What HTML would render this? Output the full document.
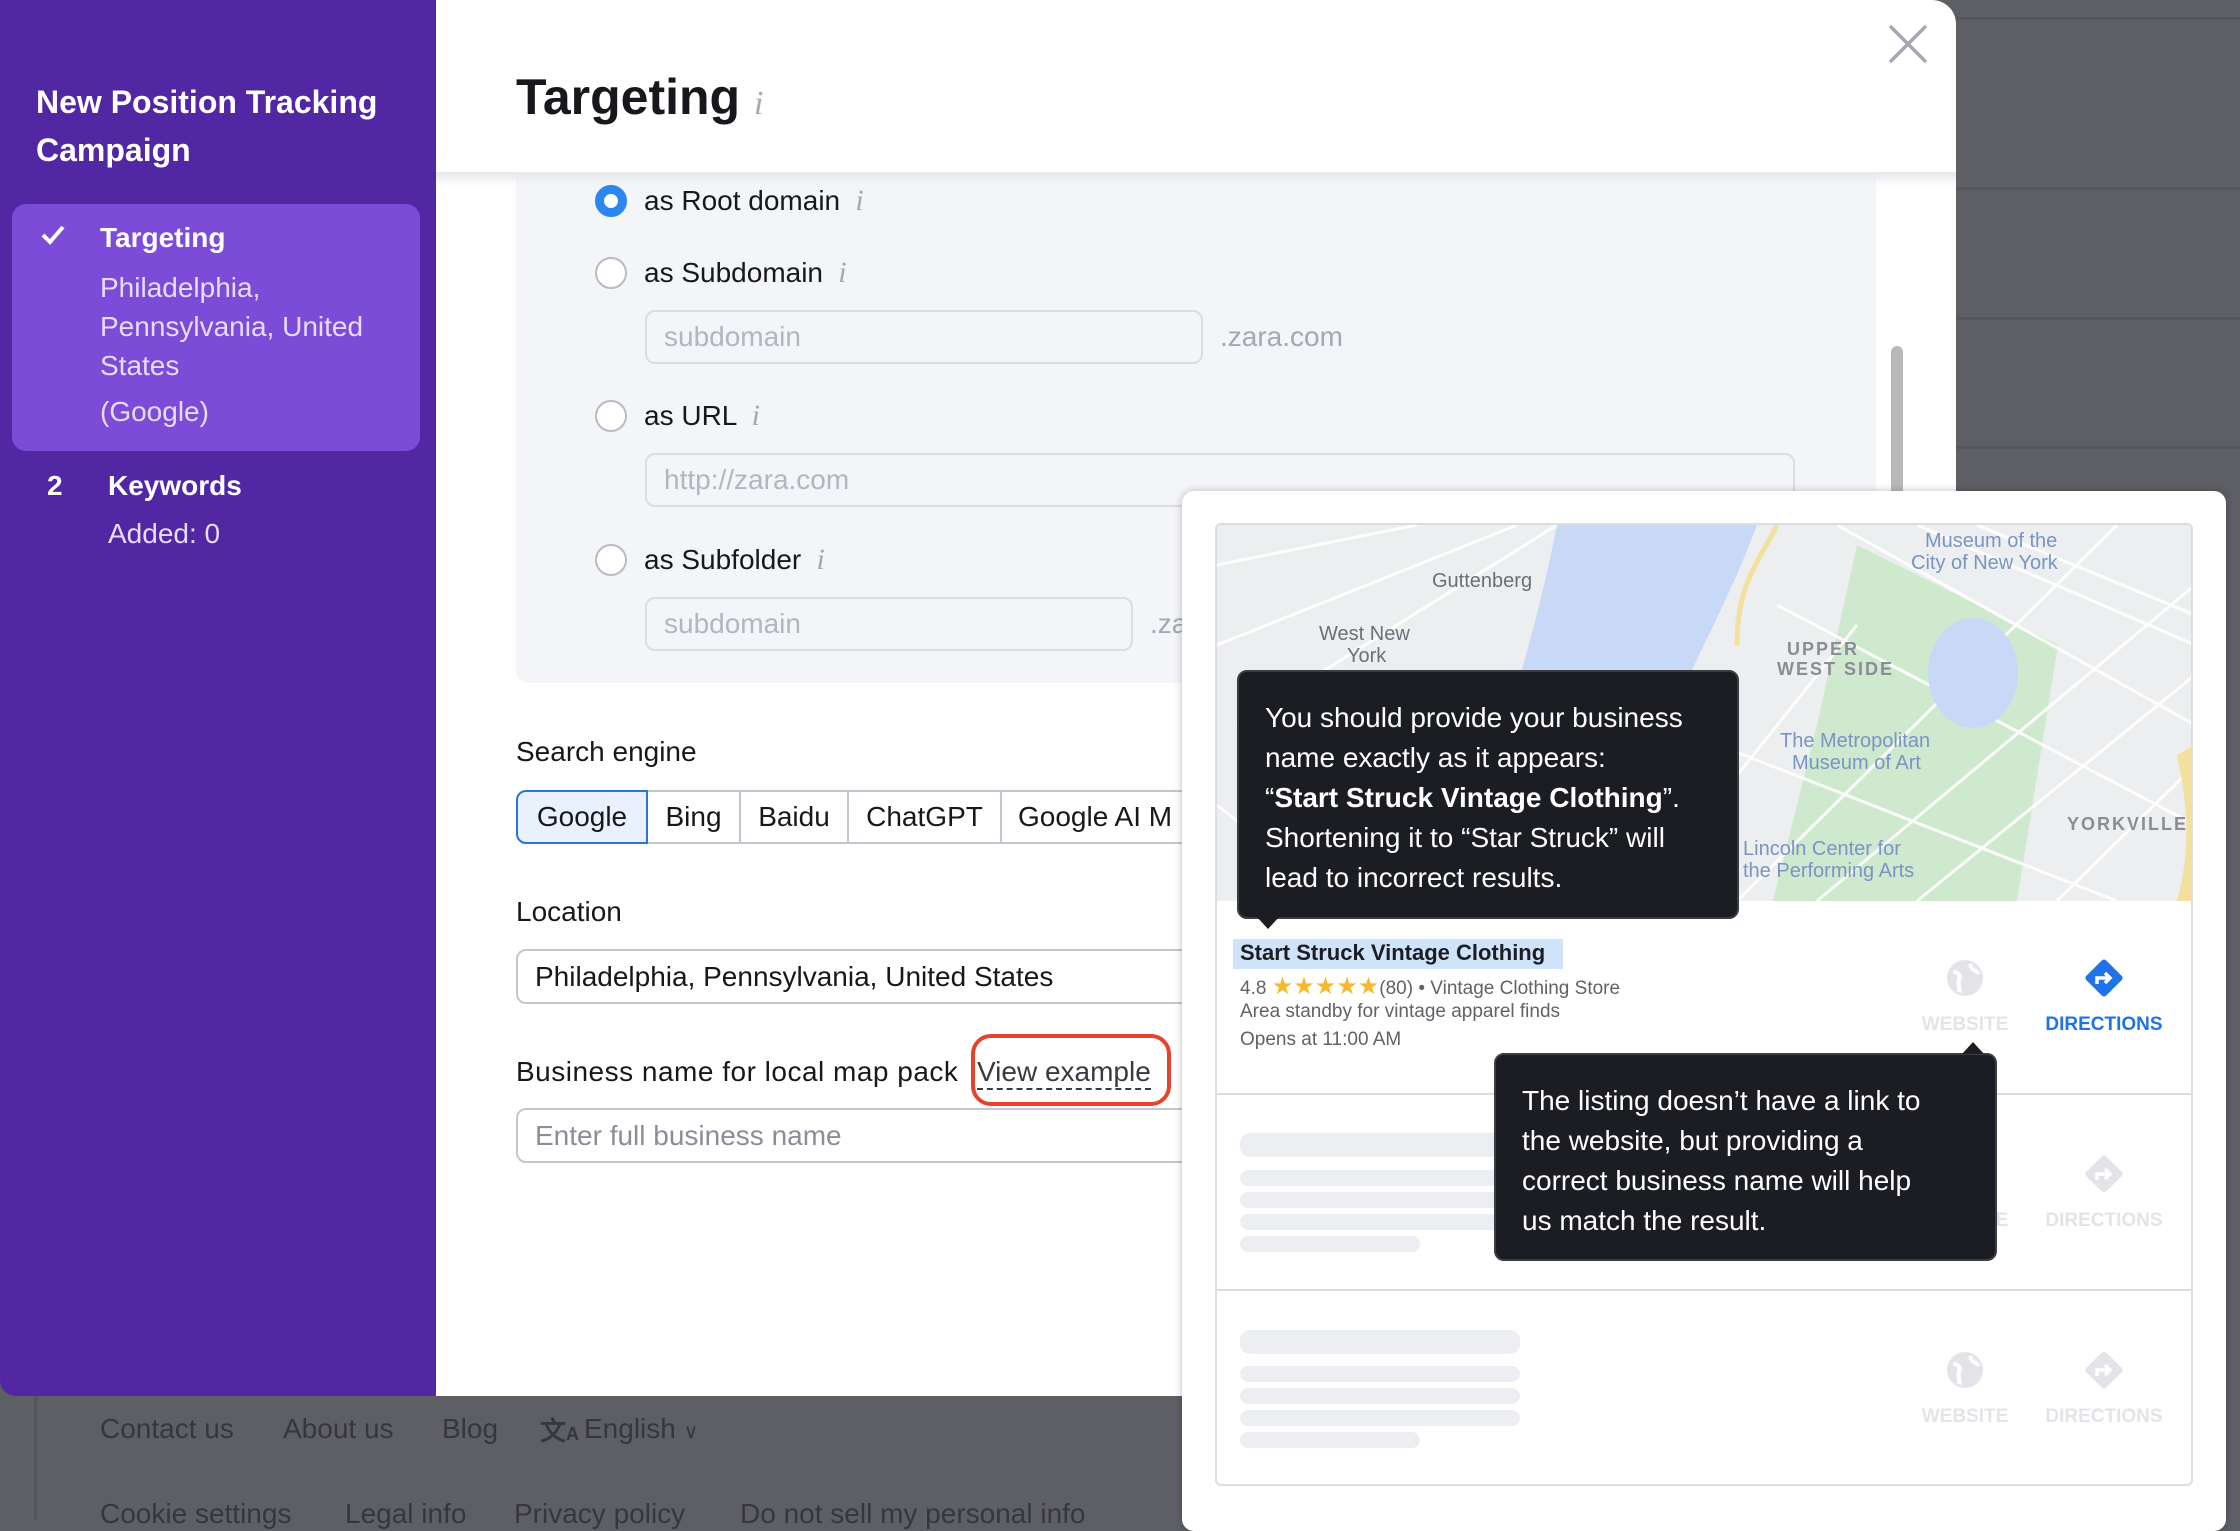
<!DOCTYPE html>
<html><head><meta charset="utf-8"><style>
*{box-sizing:border-box;margin:0;padding:0}
body{width:2240px;height:1520px;overflow:hidden;background:#5e5f65;font-family:"Liberation Sans",sans-serif;position:relative}
.a{position:absolute;white-space:nowrap}
.hl{position:absolute;left:1955px;right:0;height:3px;background:#56575d}
.sb{left:0;top:0;width:436px;height:1396px;background:#5227a3;border-bottom-left-radius:16px}
.modal{left:436px;top:0;width:1520px;height:1396px;background:#fff;border-top-right-radius:24px}
.t28{font-size:28px;color:#17181c}
.inp{position:absolute;border:2px solid #dcdde3;border-radius:10px;background:#f4f5f9;font-size:28px;color:#b3b5bf;padding-left:17px;display:flex;align-items:center}
.radio{position:absolute;width:32px;height:32px;border-radius:50%;border:2px solid #b9bac3;background:#fff}
.info{font-family:"Liberation Serif",serif;font-style:italic;color:#a5a7b2;font-size:30px}
.btn{position:absolute;top:790px;height:54px;border:2px solid #c4c6cf;font-size:28px;color:#17181c;display:flex;align-items:center;justify-content:center;background:#fff}
.tip{position:absolute;background:#1b1d23;color:#fff;border-radius:10px;font-size:28px;line-height:40px;padding:26px 26px;border:2px solid #3b3d44}
.sk{position:absolute;background:#eceef1;border-radius:10px}
.gl{position:absolute;font-size:19px;font-weight:bold;color:#e3e4e8;text-align:center;width:140px}
.ft{font-size:28px;color:#36373c}
</style></head><body>
<div class="hl" style="top:17px"></div><div class="hl" style="top:187px"></div><div class="hl" style="top:317px"></div><div class="hl" style="top:446px"></div>

<!-- footer -->
<div class="a" style="left:34px;top:1396px;width:3px;height:124px;background:#55565c"></div>
<div class="a ft" style="left:100px;top:1413px">Contact us</div>
<div class="a ft" style="left:283px;top:1413px">About us</div>
<div class="a ft" style="left:442px;top:1413px">Blog</div>
<div class="a ft" style="left:540px;top:1411px;font-size:26px;font-weight:bold">文<span style="font-size:18px">A</span></div>
<div class="a ft" style="left:584px;top:1413px">English <span style="font-size:20px">&#8744;</span></div>
<div class="a ft" style="left:100px;top:1498px">Cookie settings</div>
<div class="a ft" style="left:345px;top:1498px">Legal info</div>
<div class="a ft" style="left:514px;top:1498px">Privacy policy</div>
<div class="a ft" style="left:740px;top:1498px">Do not sell my personal info</div>

<!-- sidebar -->
<div class="a sb"></div>
<div class="a" style="left:36px;top:78px;color:#fff;font-size:32px;font-weight:bold;line-height:48px">New Position Tracking<br>Campaign</div>
<div class="a" style="left:12px;top:204px;width:408px;height:247px;background:#7c4bd8;border-radius:14px"></div>
<svg class="a" style="left:40px;top:224px" width="26" height="22" viewBox="0 0 26 22"><path d="M3 11l7 7L23 3" stroke="#fff" stroke-width="4" fill="none"/></svg>
<div class="a" style="left:100px;top:222px;color:#fff;font-size:28px;font-weight:bold">Targeting</div>
<div class="a" style="left:100px;top:268px;color:#e6dcfb;font-size:28px;line-height:39px">Philadelphia,<br>Pennsylvania, United<br>States</div>
<div class="a" style="left:100px;top:396px;color:#e6dcfb;font-size:28px">(Google)</div>
<div class="a" style="left:47px;top:470px;color:#fff;font-size:28px;font-weight:bold">2</div>
<div class="a" style="left:108px;top:470px;color:#fff;font-size:28px;font-weight:bold">Keywords</div>
<div class="a" style="left:108px;top:518px;color:#e6dcfb;font-size:28px">Added: 0</div>

<!-- modal -->
<div class="a modal"></div>
<div class="a" style="left:516px;top:172px;width:1360px;height:511px;background:#f4f5f9;border-radius:0 0 12px 12px"></div>
<div class="a" style="left:436px;top:172px;width:1520px;height:14px;background:linear-gradient(#e6e7eb,rgba(255,255,255,0))"></div>
<div class="a" style="left:1891px;top:346px;width:12px;height:160px;background:#b8b8ba;border-radius:6px"></div>
<div class="a" style="left:516px;top:68px;font-size:50px;font-weight:bold;color:#17181c">Targeting <span class="info" style="font-size:34px;font-weight:normal">i</span></div>
<svg class="a" style="left:1888px;top:24px" width="40" height="40" viewBox="0 0 40 40"><path d="M3 3L37 37M37 3L3 37" stroke="#a5a7b2" stroke-width="3.5" stroke-linecap="round"/></svg>

<div class="radio" style="left:595px;top:185px;border:9px solid #2b86f0"></div>
<div class="a t28" style="left:644px;top:184px">as Root domain <span class="info">&nbsp;i</span></div>
<div class="radio" style="left:595px;top:257px"></div>
<div class="a t28" style="left:644px;top:256px">as Subdomain <span class="info">&nbsp;i</span></div>
<div class="inp" style="left:645px;top:310px;width:558px;height:54px">subdomain</div>
<div class="a" style="left:1220px;top:321px;font-size:28px;color:#a5a7b2">.zara.com</div>
<div class="radio" style="left:595px;top:400px"></div>
<div class="a t28" style="left:644px;top:399px">as URL <span class="info">&nbsp;i</span></div>
<div class="inp" style="left:645px;top:453px;width:1150px;height:54px">http://zara.com</div>
<div class="radio" style="left:595px;top:544px"></div>
<div class="a t28" style="left:644px;top:543px">as Subfolder <span class="info">&nbsp;i</span></div>
<div class="inp" style="left:645px;top:597px;width:488px;height:54px">subdomain</div>
<div class="a" style="left:1150px;top:608px;font-size:28px;color:#a5a7b2">.za</div>

<div class="a t28" style="left:516px;top:736px">Search engine</div>
<div class="btn" style="left:516px;width:132px;background:#e8f1fd;border-color:#2b73d9;border-radius:10px 0 0 10px;z-index:2">Google</div>
<div class="btn" style="left:646px;width:95px">Bing</div>
<div class="btn" style="left:739px;width:110px">Baidu</div>
<div class="btn" style="left:847px;width:155px">ChatGPT</div>
<div class="btn" style="left:1000px;width:200px;justify-content:flex-start;padding-left:16px">Google AI M</div>

<div class="a t28" style="left:516px;top:896px">Location</div>
<div class="inp" style="left:516px;top:949px;width:700px;height:55px;background:#fff;border-color:#c4c6cf;color:#17181c">Philadelphia, Pennsylvania, United States</div>
<div class="a t28" style="left:516px;top:1056px;letter-spacing:0.5px">Business name for local map pack</div>
<div class="a t28" style="left:977px;top:1056px;color:#3a3b42;border-bottom:2px dashed #3a3b42;line-height:32px">View example</div>
<div class="a" style="left:971px;top:1034px;width:200px;height:72px;border:4px solid #e5432d;border-radius:20px"></div>
<div class="inp" style="left:516px;top:1108px;width:700px;height:55px;background:#fff;border-color:#c4c6cf;color:#8b8d98">Enter full business name</div>

<!-- popover -->
<div class="a" style="left:1182px;top:491px;width:1044px;height:1040px;background:#fff;border-radius:12px;box-shadow:0 0 8px rgba(0,0,0,.25)"></div>
<div class="a" style="left:1215px;top:523px;width:978px;height:963px;border:2px solid #dcdde3;border-radius:6px;overflow:hidden">
<svg width="978" height="376" viewBox="0 0 978 376" style="display:block">
<rect width="978" height="376" fill="#eceeef"/>
<path d="M640 20L841 120L800 376L556 376L600 200Z" fill="#cfe9cf"/>
<g stroke="#fff" stroke-width="3" opacity=".9">
<path d="M0 40L200 0M0 120L300 0M20 200L340 0M600 376L978 60M520 376L900 0M700 376L978 150M450 200L900 376M560 80L978 300M0 280L120 376"/>
<path d="M620 0L978 200M700 0L978 120M420 376L640 100M760 0L978 90M840 376L978 240"/>
</g>
<path d="M340 0L540 0C510 80 470 150 440 220L400 376L200 376C250 300 300 200 340 0Z" fill="#c7d9f7"/>
<ellipse cx="756" cy="148" rx="45" ry="55" fill="#c7d9f7"/>
<path d="M960 230C970 280 975 320 960 376L978 376L978 220Z" fill="#f3df9e"/>
<path d="M560 0C540 40 520 60 520 120" stroke="#f3df9e" stroke-width="5" fill="none"/>
<g font-family="Liberation Sans" font-size="20" fill="#6b6f78">
<text x="215" y="62">Guttenberg</text>
<text x="102" y="115">West New</text><text x="130" y="137">York</text>
</g>
<g font-family="Liberation Sans" font-size="20" fill="#7a94c4">
<text x="708" y="22">Museum of the</text><text x="694" y="44">City of New York</text>
<text x="563" y="222">The Metropolitan</text><text x="575" y="244">Museum of Art</text>
<text x="526" y="330">Lincoln Center for</text><text x="526" y="352">the Performing Arts</text>
</g>
<g font-family="Liberation Sans" font-size="18" font-weight="bold" fill="#8a8d95" letter-spacing="2">
<text x="570" y="130">UPPER</text><text x="560" y="150">WEST SIDE</text>
<text x="850" y="305">YORKVILLE</text>
</g>
</svg>
<div style="position:absolute;left:0;right:0;top:568px;height:2px;background:#dcdde3"></div>
<div style="position:absolute;left:0;right:0;top:764px;height:2px;background:#dcdde3"></div>
</div>
<div class="a" style="left:1233px;top:939px;width:330px;height:30px;background:#cfe3fa"></div>
<div class="a" style="left:1240px;top:940px;font-size:22px;font-weight:bold;color:#1b1d23">Start Struck Vintage Clothing</div>
<div class="a" style="left:1240px;top:972px;font-size:19px;color:#5f6368">4.8 <span style="color:#f6b92b;font-size:24px">★★★★★</span>(80) • Vintage Clothing Store</div>
<div class="a" style="left:1240px;top:1001px;font-size:19px;color:#5f6368">Area standby for vintage apparel finds</div>
<div class="a" style="left:1240px;top:1029px;font-size:19px;color:#5f6368">Opens at 11:00 AM</div>

<!-- icons -->
<svg class="a" style="left:1945px;top:958px" width="40" height="40" viewBox="0 0 40 40"><circle cx="20" cy="20" r="18" fill="#e3e4e8"/><path d="M8 14c6 0 8 4 6 8s2 8 0 12M26 6c-2 6 6 6 8 10" stroke="#fff" stroke-width="4" fill="none"/></svg>
<div class="gl" style="left:1895px;top:1014px">WEBSITE</div>
<svg class="a" style="left:2082px;top:956px" width="44" height="44" viewBox="0 0 44 44"><rect x="8" y="8" width="28" height="28" transform="rotate(45 22 22)" rx="3" fill="#1f73e6"/><path d="M15 28v-6h12M23 17l5 5-5 5" stroke="#fff" stroke-width="3.5" fill="none"/></svg>
<div class="gl" style="left:2034px;top:1014px;color:#1f73e6">DIRECTIONS</div>
<svg class="a" style="left:2082px;top:1152px" width="44" height="44" viewBox="0 0 44 44"><rect x="8" y="8" width="28" height="28" transform="rotate(45 22 22)" rx="3" fill="#e3e4e8"/><path d="M15 28v-6h12M23 17l5 5-5 5" stroke="#fff" stroke-width="3.5" fill="none"/></svg>
<div class="gl" style="left:2034px;top:1210px">DIRECTIONS</div>
<div class="gl" style="left:1895px;top:1210px">WEBSITE</div>
<svg class="a" style="left:1945px;top:1350px" width="40" height="40" viewBox="0 0 40 40"><circle cx="20" cy="20" r="18" fill="#e3e4e8"/><path d="M8 14c6 0 8 4 6 8s2 8 0 12M26 6c-2 6 6 6 8 10" stroke="#fff" stroke-width="4" fill="none"/></svg>
<div class="gl" style="left:1895px;top:1406px">WEBSITE</div>
<svg class="a" style="left:2082px;top:1348px" width="44" height="44" viewBox="0 0 44 44"><rect x="8" y="8" width="28" height="28" transform="rotate(45 22 22)" rx="3" fill="#e3e4e8"/><path d="M15 28v-6h12M23 17l5 5-5 5" stroke="#fff" stroke-width="3.5" fill="none"/></svg>
<div class="gl" style="left:2034px;top:1406px">DIRECTIONS</div>

<div class="sk" style="left:1240px;top:1133px;width:280px;height:24px"></div>
<div class="sk" style="left:1240px;top:1170px;width:280px;height:16px"></div>
<div class="sk" style="left:1240px;top:1192px;width:280px;height:16px"></div>
<div class="sk" style="left:1240px;top:1214px;width:280px;height:16px"></div>
<div class="sk" style="left:1240px;top:1236px;width:180px;height:16px"></div>
<div class="sk" style="left:1240px;top:1330px;width:280px;height:24px"></div>
<div class="sk" style="left:1240px;top:1366px;width:280px;height:16px"></div>
<div class="sk" style="left:1240px;top:1388px;width:280px;height:16px"></div>
<div class="sk" style="left:1240px;top:1410px;width:280px;height:16px"></div>
<div class="sk" style="left:1240px;top:1432px;width:180px;height:16px"></div>

<div class="tip" style="left:1237px;top:670px;width:502px;height:249px">You should provide your business<br>name exactly as it appears:<br>“<b>Start Struck Vintage Clothing</b>”.<br>Shortening it to “Star Struck” will<br>lead to incorrect results.</div>
<div class="a" style="left:1257px;top:917px;width:0;height:0;border-left:11px solid transparent;border-right:11px solid transparent;border-top:12px solid #1b1d23"></div>
<div class="tip" style="left:1494px;top:1053px;width:503px;height:208px">The listing doesn’t have a link to<br>the website, but providing a<br>correct business name will help<br>us match the result.</div>
<div class="a" style="left:1962px;top:1042px;width:0;height:0;border-left:11px solid transparent;border-right:11px solid transparent;border-bottom:12px solid #1b1d23"></div>
</body></html>
